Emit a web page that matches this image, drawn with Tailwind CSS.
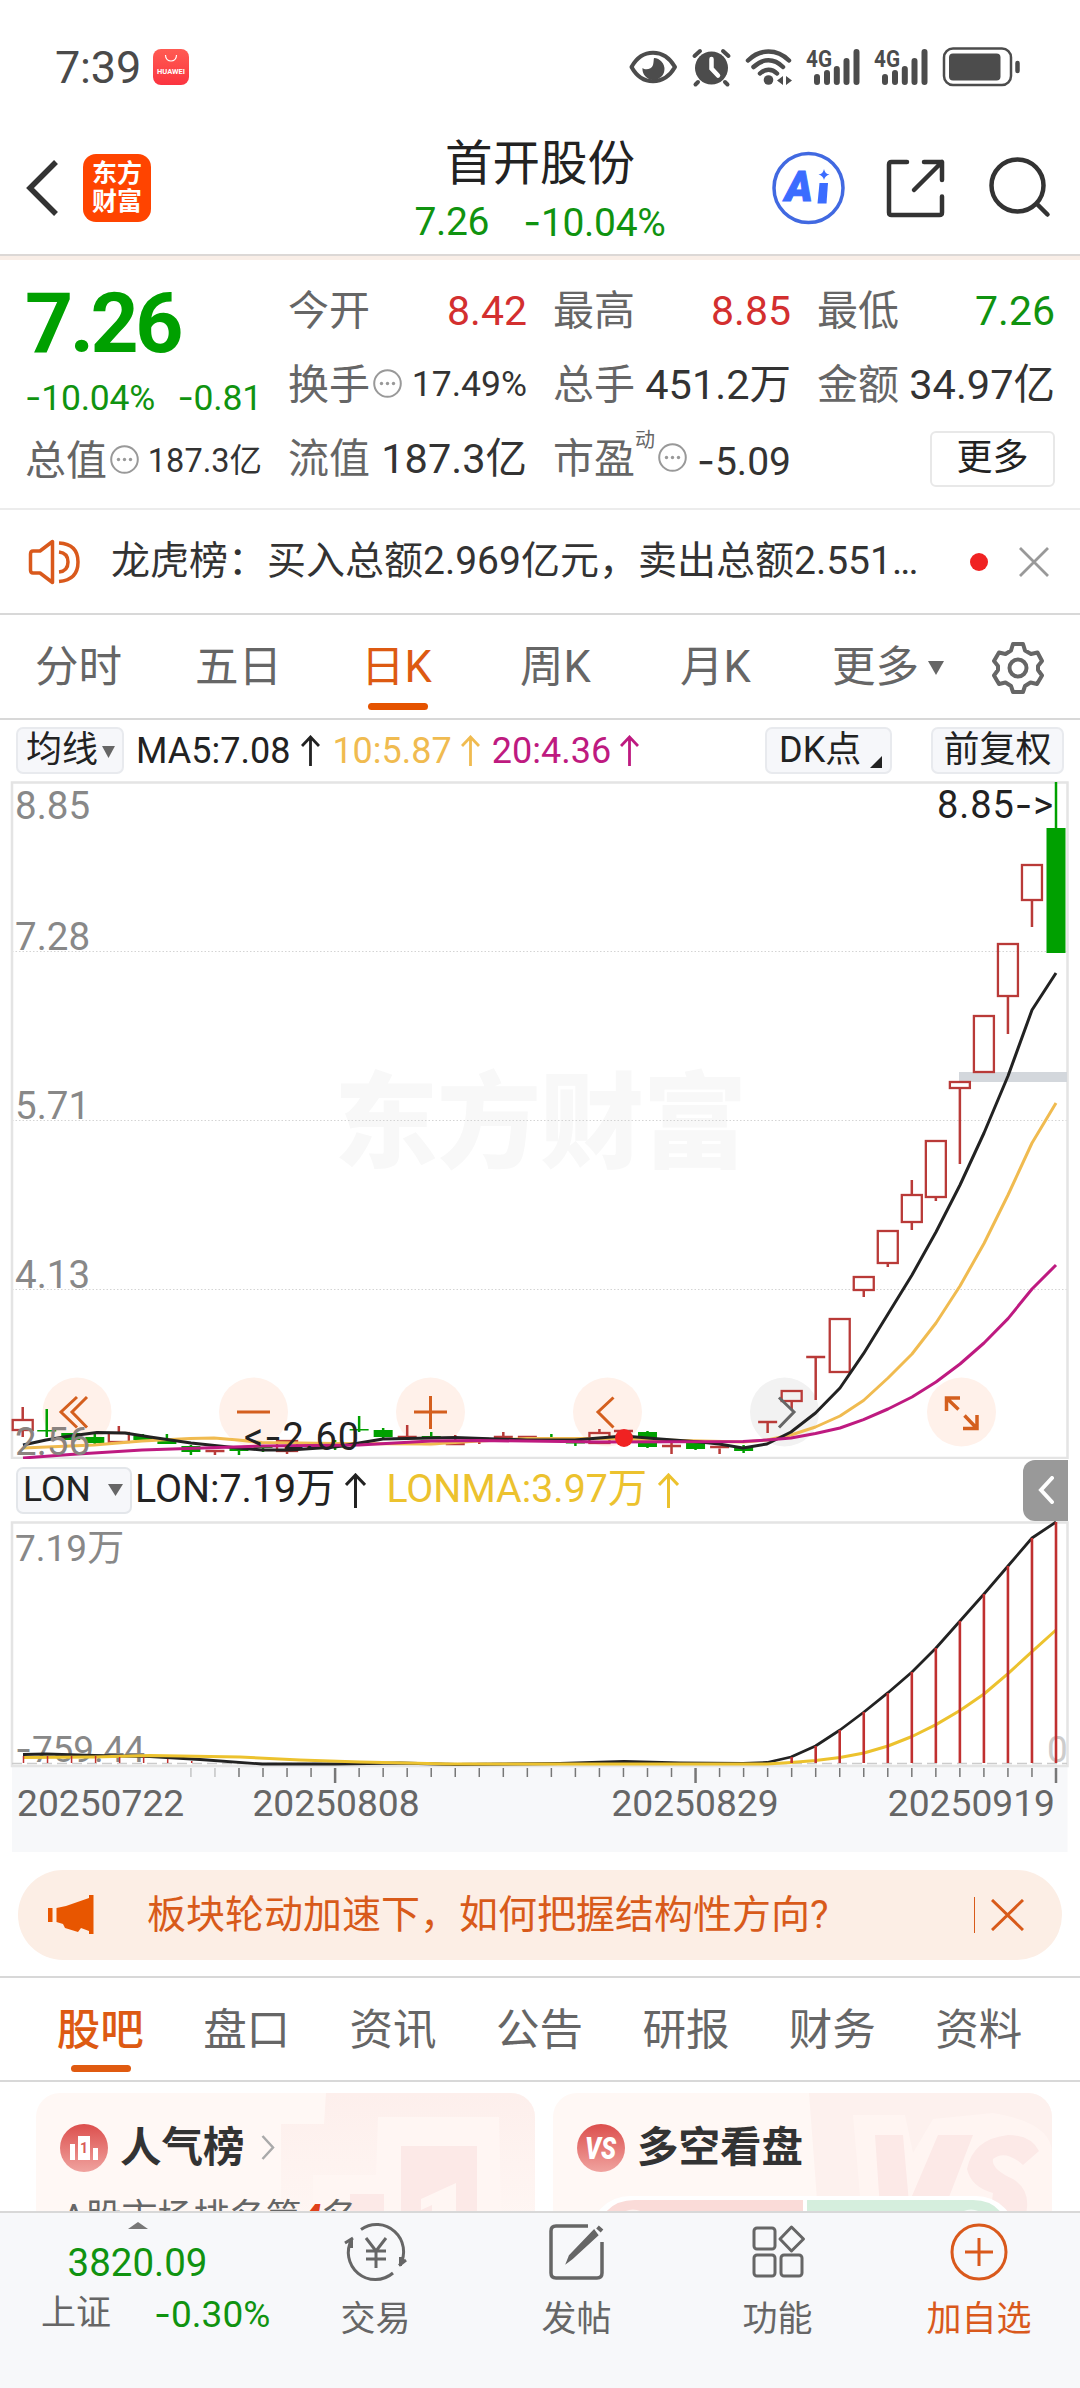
<!DOCTYPE html>
<html lang="zh-CN">
<head>
    <meta charset="UTF-8">
    <meta name="viewport" content="width=device-width, initial-scale=1.0">
    <title>首开股份</title>
    <script src="https://cdn.jsdelivr.net/npm/@tailwindcss/browser@4"></script>
</head>
<body class="bg-white">
<div class="w-[1080px] h-[2388px] overflow-hidden flex flex-col bg-white text-[#333] leading-none whitespace-nowrap font-['Roboto','Noto_Sans_CJK_SC',sans-serif]">

    <!-- Status bar -->
    <div class="h-[130px] shrink-0 flex items-center justify-between pl-[55px] pr-[59px] pt-[4px]">
        <div class="flex items-center gap-3">
            <span class="text-[45px] text-[#4a4a4a] tracking-[-0.2px]">7:39</span>
            <div class="w-9 h-9 rounded-[8px] bg-gradient-to-b from-[#ff5a52] to-[#fb3340] flex flex-col items-center">
                <svg class="mt-1.5" width="14" height="9" viewBox="0 0 14 9" fill="none" stroke="#fff" stroke-width="1.2"><path d="M1.500 0C1.500 8 12.500 8 12.500 0"/></svg>
                <span class="text-white text-[7.500px] font-bold mt-1">HUAWEI</span>
            </div>
        </div>
        <svg width="392" height="42" viewBox="630 46 392 42" fill="none" stroke="#4c4c4c" stroke-linecap="round">
            <!-- eye -->
            <path d="M632.500 67C643 48 665 48 676 67C665 86 643 86 632.500 67Z" stroke-width="4" stroke-linejoin="round"/>
            <path d="M655 58a11 11 0 1 1 -11.500 10c2 2 9 2 10.500 -3c.8 -3 .5 -5 1 -7z" fill="#4c4c4c" stroke="none"/>
            <!-- alarm -->
            <circle cx="712.500" cy="68" r="16.500" fill="#4c4c4c" stroke="none"/>
            <path d="M695.500 56l5.500 -5M729.500 56l-5.500 -5M699 82l-2.500 2.500M726 82l2.500 2.500" stroke-width="4"/>
            <path d="M712.500 59v9.500l6.500 7" stroke="#fff" stroke-width="4.500"/>
            <!-- wifi -->
            <path d="M749 60.500C761 48.500 778 48.500 790 60.500M754.500 67C764 58 775 58 784 67M761 73.500C766 68.500 773 68.500 778 73.500" stroke-width="4.500"/>
            <circle cx="769.500" cy="80" r="4.800" fill="#4c4c4c" stroke="none"/>
            <path d="M784 76v9l-6 -4.500zM787 76v9l6 -4.500z" fill="#4c4c4c" stroke="none"/>
            <!-- signals -->
            <g stroke-width="6">
                <path d="M818 77v5M828 73v9M837.800 69v13M847.500 61v21M857.500 52v30"/>
                <path d="M886 77v5M896 73v9M905.800 69v13M915.500 61v21M925.500 52v30"/>
            </g>
            <g fill="#4c4c4c" stroke="none" font-family="Roboto" font-weight="700" font-size="24">
                <text x="807" y="66.500" textLength="26" lengthAdjust="spacingAndGlyphs">4G</text>
                <text x="875" y="66.500" textLength="26" lengthAdjust="spacingAndGlyphs">4G</text>
            </g>
            <!-- battery -->
            <rect x="945" y="48.500" width="67" height="36.500" rx="9" stroke-width="2.500"/>
            <rect x="950" y="53.500" width="51.500" height="27" rx="4" fill="#4c4c4c" stroke="none"/>
            <path d="M1018.500 63v8" stroke-width="4.500"/>
        </svg>
    </div>

    <!-- Header -->
    <header class="h-[126px] shrink-0 flex items-center justify-between pl-[26px] pr-[29px] pb-[8px] border-b-2 border-[#dcd8d6] relative">
        <div class="flex items-center gap-6">
            <svg width="33" height="56" viewBox="0 0 33 56" fill="none" stroke="#333" stroke-width="5.500"><path d="M30 2L4 28L30 54"/></svg>
            <div class="w-[68px] h-[68px] rounded-[13px] bg-[#ff4400] text-white font-bold text-[25px] leading-[28px] flex flex-col items-center justify-center">
                <span>东方</span>
                <span>财富</span>
            </div>
        </div>
        <div class="absolute left-0 right-0 top-[9px] flex flex-col items-center">
            <h1 class="text-[47.500px] leading-[50px] text-[#222]">首开股份</h1>
            <div class="flex gap-[34px] text-[39px] leading-[66px] text-[#109310] tracking-[-0.3px]">
                <span>7.26</span>
                <span><span class="font-['Inter']">-</span>10.04%</span>
            </div>
        </div>
        <div class="flex items-center">
            <svg width="74" height="74" viewBox="771 151 74 74">
                <circle cx="808.500" cy="188" r="34.500" fill="none" stroke="#4169e1" stroke-width="3.500"/>
                <text x="785" y="201" font-family="Roboto" font-size="42" font-weight="900" font-style="italic" fill="#3b6cff" stroke="#3b6cff" stroke-width="1">A</text>
                <path d="M819.500 183h8.500l-1.500 20.500h-9z" fill="#3b6cff"/>
                <path d="M824 169q1 5 5.500 5.500q-4.500 1 -5.500 5.500q-1 -4.500 -5.500 -5.500q4.500 -.5 5.500 -5.500z" fill="#3b6cff"/>
            </svg>
            <svg class="ml-[41px]" width="60" height="60" viewBox="887 158 60 60" fill="none" stroke="#333" stroke-width="4.500" stroke-linecap="round" stroke-linejoin="round">
                <path d="M908 162H892.500Q890 162 890 164.500V212.500Q890 215 892.500 215H940.500Q943 215 943 212.500V196.500M925 162H943V180M943 162L915 190"/>
            </svg>
            <svg class="ml-[43px]" width="62" height="62" viewBox="990 157 62 62" fill="none" stroke="#333" stroke-width="4.500" stroke-linecap="round">
                <circle cx="1018.500" cy="185.500" r="26"/><path d="M1038 204L1048.500 214.500"/>
            </svg>
        </div>
    </header>
    <div class="h-[4px] shrink-0 bg-[#f9eee7]"></div>

    <!-- Quote -->
    <section class="h-[250px] shrink-0 border-b-2 border-[#ececec] grid grid-cols-[237px_239px_238px_238px] gap-x-[26px] pl-[25px] text-[41px]">
        <div class="flex flex-col">
            <div class="h-[120px] pt-[22px] text-[84px] font-bold tracking-[-3.500px] text-[#00a000]">7.26</div>
            <div class="flex justify-between text-[35.500px] text-[#109310] tracking-[-0.2px]">
                <span><span class="font-['Inter']">-</span>10.04%</span>
                <span><span class="font-['Inter']">-</span>0.81</span>
            </div>
            <div class="flex items-center h-[60px] mt-[15px]">
                <span class="text-[#666]">总值</span>
                <svg class="ml-[3px] mb-1" width="29" height="29" viewBox="0 0 29 29" fill="#999"><circle cx="14.500" cy="14.500" r="13.300" fill="none" stroke="#999" stroke-width="2"/><circle cx="8.500" cy="14.500" r="1.700"/><circle cx="14.500" cy="14.500" r="1.700"/><circle cx="20.500" cy="14.500" r="1.700"/></svg>
                <span class="ml-auto text-[32.500px]">187.3亿</span>
            </div>
        </div>
        <div class="flex flex-col pt-[22px]">
            <div class="h-[58px] flex items-center justify-between"><span class="text-[#666]">今开</span><span class="text-[#d32f2f]">8.42</span></div>
            <div class="h-[58px] mt-4 flex items-center">
                <span class="text-[#666]">换手</span>
                <svg class="ml-[3px] mb-1" width="29" height="29" viewBox="0 0 29 29" fill="#999"><circle cx="14.500" cy="14.500" r="13.300" fill="none" stroke="#999" stroke-width="2"/><circle cx="8.500" cy="14.500" r="1.700"/><circle cx="14.500" cy="14.500" r="1.700"/><circle cx="20.500" cy="14.500" r="1.700"/></svg>
                <span class="ml-auto text-[35.500px]">17.49%</span>
            </div>
            <div class="h-[58px] mt-4 flex items-center justify-between"><span class="text-[#666]">流值</span><span class="text-[41.500px]">187.3亿</span></div>
        </div>
        <div class="flex flex-col pt-[22px]">
            <div class="h-[58px] flex items-center justify-between"><span class="text-[#666]">最高</span><span class="text-[#d32f2f]">8.85</span></div>
            <div class="h-[58px] mt-4 flex items-center justify-between"><span class="text-[#666]">总手</span><span class="text-[41.500px]">451.2万</span></div>
            <div class="h-[58px] mt-4 flex items-center">
                <span class="text-[#666]">市盈</span>
                <span class="text-[20px] text-[#666] self-start">动</span>
                <svg class="ml-[3px] mb-1" width="29" height="29" viewBox="0 0 29 29" fill="#999"><circle cx="14.500" cy="14.500" r="13.300" fill="none" stroke="#999" stroke-width="2"/><circle cx="8.500" cy="14.500" r="1.700"/><circle cx="14.500" cy="14.500" r="1.700"/><circle cx="20.500" cy="14.500" r="1.700"/></svg>
                <span class="ml-auto text-[39px] pt-1"><span class="font-['Inter']">-</span>5.09</span>
            </div>
        </div>
        <div class="flex flex-col pt-[22px]">
            <div class="h-[58px] flex items-center justify-between"><span class="text-[#666]">最低</span><span class="text-[#109310]">7.26</span></div>
            <div class="h-[58px] mt-4 flex items-center justify-between"><span class="text-[#666]">金额</span><span class="text-[41.500px]">34.97亿</span></div>
            <button class="mt-[17px] self-end w-[125px] h-[56px] rounded-[6px] border-2 border-[#e8e8e8] text-[36px] text-[#222] leading-none pb-0.5">更多</button>
        </div>
    </section>

    <!-- News line -->
    <section class="h-[105px] shrink-0 border-b-2 border-[#d8d8d8] flex items-center pl-[28px] pr-[30px]">
        <svg width="54" height="46" viewBox="0 0 54 46" fill="none" stroke="#d9591c" stroke-width="3.500" stroke-linejoin="round">
            <path d="M24.500 2.500V43.500L12 34H5Q2.500 34 2.500 31V15Q2.500 12 5 12H12Z"/>
            <path d="M31 13Q40 14 40 23Q40 32 31 33M31 4Q50 5 50 23Q50 41 31 42.500"/>
        </svg>
        <span class="ml-[29px] text-[39px]">龙虎榜：买入总额2.969亿元，卖出总额2.551<span class="tracking-[-2px]">...</span></span>
        <span class="ml-auto w-[18px] h-[18px] rounded-full bg-[#f02222]"></span>
        <svg class="ml-[30px]" width="32" height="30" viewBox="0 0 32 30" fill="none" stroke="#999" stroke-width="2.800"><path d="M2 1L30 29M30 1L2 29"/></svg>
    </section>

    <!-- Period tabs -->
    <nav class="h-[105px] shrink-0 border-b-2 border-[#d8d8d8] flex items-center pl-[35px] pr-[35px] pt-[2px] text-[43.500px] text-[#666]">
        <span class="w-[160px]">分时</span>
        <span class="w-[166px]">五日</span>
        <span class="w-[159px] text-[#dd5a12] relative">日K<i class="absolute left-[7px] -bottom-[21px] w-[60px] h-[7px] rounded-full bg-[#e55300]"></i></span>
        <span class="w-[160px]">周K</span>
        <span class="w-[152px]">月K</span>
        <span>更多</span>
        <svg class="ml-[9px]" width="16" height="14" viewBox="0 0 16 14" fill="#666"><path d="M0 0H16L8 14Z"/></svg>
        <svg class="ml-auto" width="54" height="54" viewBox="992 639 54 54" fill="none" stroke="#666" stroke-width="4" stroke-linejoin="round">
            <path d="M1014 642H1024L1026 648.500L1032 652L1038.500 650.500L1043 659L1039 664V668L1043 673.500L1038 682L1031.500 680.500L1026 684L1024 690H1014L1012 684L1006.500 680.500L1000 682L995 673.500L999 668V664L995 659L1000 650.500L1006.500 652L1012 648.500Z"/>
            <circle cx="1019" cy="666" r="8.500"/>
        </svg>
    </nav>

    <!-- MA row -->
    <div class="h-[61px] shrink-0 flex items-center pl-4 pr-4 text-[36px] text-[#222]">
        <div class="w-[108px] h-[47px] rounded-[7px] border-2 border-[#e8eaee] bg-[#f6f7fa] flex items-center gap-[4px] pl-2 pb-0.5">均线<svg class="mt-1" width="13" height="12" viewBox="0 0 14 13" fill="#666"><path d="M0 0H14L7 13Z"/></svg></div>
        <span class="ml-[12px]">MA5:7.08</span>
        <svg class="ml-[11px]" width="19" height="31" viewBox="0 0 19 31" fill="none" stroke="#222" stroke-width="2.800"><path d="M9.500 31V3M1 11L9.500 2L18 11"/></svg>
        <span class="ml-[12px] text-[#f0bb50]">10:5.87</span>
        <svg class="ml-[9px]" width="19" height="31" viewBox="0 0 19 31" fill="none" stroke="#f0bb50" stroke-width="2.800"><path d="M9.500 31V3M1 11L9.500 2L18 11"/></svg>
        <span class="ml-[12px] text-[#be1a80]">20:4.36</span>
        <svg class="ml-[9px]" width="19" height="31" viewBox="0 0 19 31" fill="none" stroke="#be1a80" stroke-width="2.800"><path d="M9.500 31V3M1 11L9.500 2L18 11"/></svg>
        <div class="ml-auto w-[127px] h-[47px] rounded-[7px] border-2 border-[#e8eaee] bg-[#f6f7fa] flex items-center pl-3 pb-0.5">DK点<svg class="ml-[9px] mt-6" width="12" height="12" viewBox="0 0 12 12" fill="#222"><path d="M12 0V12H0Z"/></svg></div>
        <div class="ml-[39px] w-[133px] h-[47px] rounded-[7px] border-2 border-[#e8eaee] bg-[#f6f7fa] flex items-center justify-center pb-0.5">前复权</div>
    </div>

    <!-- K line chart -->
    <svg id="kline" class="shrink-0 block" width="1080" height="678" viewBox="0 781 1080 678" fill="none">
        <text x="334" y="1160" font-size="104" font-weight="900" fill="#f8f8f8" textLength="413">东方财富</text>
        <path d="M12 951.500H1067M12 1120.500H1067M12 1289.500H1067" stroke="#d4d4d4" stroke-width="1" stroke-dasharray="1.500 2"/>
        <path d="M12 782.500H1067.500V1458H12Z" stroke="#e4e4e4" stroke-width="2.500"/>
        <g fill="#fff1ea">
            <circle cx="77" cy="1412" r="34.500"/><circle cx="253.500" cy="1412" r="34.500"/><circle cx="430.500" cy="1412" r="34.500"/><circle cx="607.500" cy="1412" r="34.500"/><circle cx="961.500" cy="1412" r="34.500"/>
            <circle cx="784.500" cy="1412" r="34.500" fill="#f2f2f2"/>
        </g>
        <path d="M959 1077H1067" stroke="#d3d7dc" stroke-width="10"/>
        <g id="candles" stroke-width="2.500"></g>
        <g stroke-width="3" stroke-linejoin="round">
            <path stroke="#f0bb50" d="M23 1448L94 1445L142 1441L190 1438.500L214 1438L238 1440L262 1442.500L335 1443.500L431 1444L479 1441L527 1438.500L599 1438.500L743 1442L767 1440L791 1435L815.500 1427L840 1416L863.500 1400.500L888 1378L912 1354L936 1323L960 1286L984 1243.500L1008 1195L1032 1143L1056 1103"/>
            <path stroke="#222" d="M23 1445L46 1440L70 1436L97 1432.500L125 1433L150 1437L191 1443L238 1448L262 1450L290 1450L335 1447L359 1443L383 1439L455 1437.500L527 1440L575 1440L599 1438L624 1436L660 1439L700 1442L719 1444L743 1448L767 1444L791 1432L815.500 1413L840 1388L863.500 1353.700L888 1314L912 1275L936 1232L960 1185L984 1133L1008 1076L1032 1010L1056 973"/>
            <path stroke="#be1a80" d="M23 1458L70 1454.500L142 1450L262 1446L359 1445L431 1441L479 1440.500L599 1442L743 1441.500L767 1440L791 1438L815.500 1433.500L840 1428L863.500 1419.600L888 1409L912 1397L936 1382L960 1364L984 1343L1008 1318.600L1032 1289L1056 1265"/>
        </g>
        <circle cx="624" cy="1438" r="9" fill="#f02222"/>
        <g font-size="38.500" fill="#888">
            <text x="15" y="819">8.85</text><text x="15" y="950">7.28</text><text x="15" y="1119">5.71</text><text x="15" y="1288">4.13</text><text x="15" y="1455" fill="#8a8380">2.56</text>
        </g>
        <g font-size="38" fill="#222">
            <text x="937" y="818" textLength="116">8.85<tspan font-family="Inter">-</tspan>&gt;</text>
            <text x="244" y="1450" textLength="115">&lt;<tspan font-family="Inter">-</tspan>2.60</text>
        </g>
        <g stroke="#d45f1e" stroke-width="3">
            <path d="M77 1397L61 1412L77 1427.500M87 1397L72 1412L87 1427.500"/>
            <path d="M237 1412H270M414 1412H447M430.500 1396V1429"/>
            <path d="M613.500 1397.500L598 1412L613.500 1427.500"/>
            <path d="M779 1397.500L794 1412L779 1427.500" stroke="#666"/>
            <path d="M946.500 1411V1398H960M946.500 1398L958.500 1409.500M963 1428.500H977V1415M964.500 1415.500L976.500 1428" stroke-width="3.500"/>
        </g>
    </svg>

    <!-- LON row -->
    <div class="h-[62px] shrink-0 flex items-center pl-4 pr-3 text-[39.300px] text-[#222]">
        <div class="w-[116px] h-[47px] rounded-[7px] border-2 border-[#e3e6ea] bg-[#f6f7fa] flex items-center pl-[5px] text-[35.500px]">LON<svg class="ml-auto mr-[7px]" width="15" height="12" viewBox="0 0 14 12" preserveAspectRatio="none" fill="#666"><path d="M0 0H14L7 12Z"/></svg></div>
        <span class="ml-[3px]">LON:7.19万</span>
        <svg class="ml-[10px]" width="21" height="35" viewBox="0 0 21 35" fill="none" stroke="#222" stroke-width="3"><path d="M10.500 35V3M1 12L10.500 2L20 12"/></svg>
        <span class="ml-[20px] text-[#ecc22e]">LONMA:3.97万</span>
        <svg class="ml-[11px]" width="21" height="35" viewBox="0 0 21 35" fill="none" stroke="#ecc22e" stroke-width="3"><path d="M10.500 35V3M1 12L10.500 2L20 12"/></svg>
        <div class="ml-auto w-[45px] h-[61px] rounded-l-[12px] bg-[#999] flex items-center justify-center">
            <svg width="16" height="28" viewBox="0 0 16 28" fill="none" stroke="#fff" stroke-width="4" stroke-linecap="round"><path d="M14 2L3 14L14 26"/></svg>
        </div>
    </div>

    <!-- LON chart -->
    <svg class="shrink-0 block" width="1080" height="331" viewBox="0 1521 1080 331" fill="none">
        <path d="M12 1767H1067.500V1852H12Z" fill="#f7f8fa"/>
        <path d="M12 1522.500H1067.500V1766H12Z" stroke="#e4e4e4" stroke-width="2.500"/>
        <path d="M12 1763.500H1067" stroke="#ccc" stroke-width="1.500" stroke-dasharray="10 5"/>
        <g id="ticks" stroke="#777" stroke-width="1.500"></g>
        <g font-size="37" fill="#888">
            <text x="15" y="1561">7.19万</text>
            <text x="15" y="1762" textLength="130"><tspan font-family="Inter">-</tspan>759.44</text>
            <text x="1047" y="1762" fill="#ccc">0</text>
        </g>
        <path stroke="#222" stroke-width="2.800" stroke-linejoin="round" d="M23 1754.500L46 1754L94 1755.500L150 1756.500L200 1759.500L262 1764L335 1764L400 1763L455 1764.500L560 1763.500L624 1761.500L680 1763L743 1763.500L767 1762.500L791 1757L815.500 1746L840 1730L864 1712L888 1692.700L912 1672L936 1648L960 1621L984 1594L1008 1566L1032 1538L1056 1522"/>
        <path stroke="#ecc22e" stroke-width="3" stroke-linejoin="round" d="M23 1757.500L94 1757L150 1755.500L240 1757L300 1760L360 1762L450 1764L560 1764L767 1764L791 1762.500L815.500 1760.500L840 1757.500L864 1753L888 1746L912 1736.500L936 1724.600L960 1710.500L984 1694L1008 1673.600L1032 1651.700L1056 1630"/>
        <g id="bars" stroke="#c03030" stroke-width="2.600"></g>
        <g font-size="37.200" fill="#666">
            <text x="17" y="1816">20250722</text>
            <text x="336" y="1816" text-anchor="middle">20250808</text>
            <text x="695" y="1816" text-anchor="middle">20250829</text>
            <text x="1055" y="1816" text-anchor="end">20250919</text>
        </g>
    </svg>

    <!-- Banner -->
    <div class="h-[90px] mt-[18px] mx-[18px] shrink-0 rounded-full bg-[#fceee5] flex items-center pl-[30px] pr-[38px] text-[39px] text-[#d85a1a]">
        <svg width="46" height="40" viewBox="0 0 46 40" fill="#e85600"><path d="M0 13H4.500V27H0ZM8.500 13L18 11L41 3V0H45.500V39H41V36L33 33L30 37L17 33L15 29L8.500 27Z"/></svg>
        <span class="ml-[53px]">板块轮动加速下，如何把握结构性方向?</span>
        <i class="ml-auto w-[1.500px] h-[36px] bg-[#d85a1a]"></i>
        <svg class="ml-4" width="33" height="32" viewBox="0 0 33 32" fill="none" stroke="#d85a1a" stroke-width="3"><path d="M1 1L32 31M32 1L1 31"/></svg>
    </div>

    <!-- Section tabs -->
    <nav class="h-[106px] mt-4 shrink-0 border-y-2 border-[#d8d8d8] grid grid-cols-7 items-center pl-[27px] pr-[28px] pt-[3px] text-[43.500px] text-[#666] text-center">
        <span class="text-[#dd5a12] font-medium relative">股吧<i class="absolute left-[44px] -bottom-[20px] w-[60px] h-[7px] rounded-full bg-[#e05a10]"></i></span>
        <span>盘口</span>
        <span>资讯</span>
        <span>公告</span>
        <span>研报</span>
        <span>财务</span>
        <span>资料</span>
    </nav>

    <!-- Cards, cut off by the bottom bar -->
    <div class="h-[129px] shrink-0 overflow-hidden flex gap-[18px] px-[36px] pt-[11px]">
        <div class="w-[499px] h-[160px] shrink-0 rounded-[24px] bg-[#fff8f5] relative overflow-hidden">
            <svg class="absolute inset-0" width="499" height="160" viewBox="0 0 499 160">
                <defs>
                    <linearGradient id="fade" x1="0" y1="0" x2="0" y2="1"><stop offset="0" stop-color="#fdefec"/><stop offset="1" stop-color="#fff8f5"/></linearGradient>
                    <linearGradient id="badge" x1="0" y1="0" x2="0" y2="1"><stop offset="0" stop-color="#dc4f4d"/><stop offset="1" stop-color="#f0a39f"/></linearGradient>
                </defs>
                <path d="M290 0H499V160H245V31H288Z" fill="url(#fade)"/>
                <path d="M342 24H463L466 160H277V82H340Z" fill="#fff6f3"/>
                <path d="M365 53H441V160H365ZM314 101H348V160H314Z" fill="#fce9e7"/>
                <path d="M385 106L420 90V160H396V112L385 117Z" fill="#fff6f3"/>
                <circle cx="48" cy="55" r="24" fill="url(#badge)"/>
                <path d="M34 51H39V67H34ZM42 43H54V67H42ZM57 55H62V67H57Z" fill="#fff"/>
                <text x="44" y="60" font-size="14" font-weight="700" fill="#d95b58">1</text>
            </svg>
            <div class="relative pl-[84px] h-[107px] pt-[2px] flex items-center gap-4 text-[41.500px] font-bold">人气榜<svg width="14" height="25" viewBox="0 0 14 25" fill="none" stroke="#aaa" stroke-width="2.500"><path d="M1.500 1L12 12.500L1.500 24"/></svg></div>
            <div class="relative pl-[26px] text-[36px] text-[#666]">A股市场排名第<span class="text-[#e0401a] font-bold italic">4</span>名</div>
        </div>
        <div class="w-[499px] h-[160px] shrink-0 rounded-[24px] bg-[#fff8f5] relative overflow-hidden">
            <svg class="absolute inset-0" width="499" height="160" viewBox="0 0 499 160">
                <path d="M256 0H499V160H268Z" fill="#fdf1ee"/>
                <path d="M300 22H352L360 60L380 26L440 20Q499 30 499 60V160H312Z" fill="#fff5f2"/>
                <path d="M322 42H350L356 110L385 42H420L386 130H328ZM486 58Q478 42 455 42Q420 46 414 76Q418 94 440 100L436 130H470Q482 100 460 86Q438 76 440 66Q452 56 470 72Z" fill="#fce9e7"/>
                <circle cx="48" cy="55" r="24" fill="url(#badge)"/>
                <text x="32" y="66" font-size="31" font-weight="900" font-style="italic" fill="#fff" textLength="31" lengthAdjust="spacingAndGlyphs">VS</text>
                <rect x="37" y="103" width="426" height="80" rx="40" fill="#fff"/>
                <path d="M250 107H82Q46 107 42 150H250Z" fill="#fadbd8"/>
                <path d="M254 107H420Q454 107 458 150H254Z" fill="#d5eedd"/>
                <circle cx="80" cy="134" r="16" fill="none" stroke="#fff2ef" stroke-width="3"/><circle cx="418" cy="134" r="16" fill="none" stroke="#f2fbf5" stroke-width="3"/>
            </svg>
            <div class="relative pl-[84px] h-[107px] pt-[2px] flex items-center text-[41.500px] font-bold">多空看盘</div>
        </div>
    </div>

    <!-- Bottom bar -->
    <footer class="flex-1 border-t-2 border-[#d8d8d8] bg-[#f7f8fa] flex text-[35px] text-[#666]">
        <div class="w-[275px] flex flex-col items-center pt-[9px]">
            <svg width="20" height="7" viewBox="0 0 20 7" fill="#777"><path d="M10 0L20 7H0Z"/></svg>
            <span class="text-[38.500px] text-[#109310] mt-[15px]">3820.09</span>
            <div class="flex items-center gap-[43px] mt-[12px] pl-[37px] self-start">
                <span class="pl-1">上证</span>
                <span class="text-[37px] text-[#109310]"><span class="font-['Inter']">-</span>0.30%</span>
            </div>
        </div>
        <div class="w-[201px] flex flex-col items-center pt-[9px]">
            <svg width="68" height="60" viewBox="0 0 68 60" fill="none" stroke="#666" stroke-width="3">
                <path d="M19 7.500A27 27 0 0 1 58 43M51 51A27 27 0 0 1 10 17M58.500 44V35M57 43.500L64 38M9.500 16V26M11 16L3 21"/>
                <path d="M24 16L34 29L44 16M34 29V46M24 29H44M24 37H44"/>
            </svg>
            <span class="mt-[20px]">交易</span>
        </div>
        <div class="w-[201px] flex flex-col items-center pt-[9px]">
            <svg width="58" height="60" viewBox="0 0 58 60" fill="none" stroke="#666" stroke-width="3.500">
                <path d="M40 4H8Q3 4 3 9V51Q3 56 8 56H49Q54 56 54 51V20"/>
                <path d="M49 13L24 36L20 39L22 34L46 9Z" fill="#666" stroke-width="2.500"/>
                <path d="M49.500 5L54 9" stroke-width="4"/>
            </svg>
            <span class="mt-[20px]">发帖</span>
        </div>
        <div class="w-[201px] flex flex-col items-center pt-[9px]">
            <svg width="56" height="60" viewBox="0 0 56 60" fill="none" stroke="#666" stroke-width="3" stroke-linejoin="round">
                <rect x="4" y="6" width="21" height="21" rx="3"/><rect x="4" y="33" width="21" height="21" rx="3"/><rect x="31" y="33" width="21" height="21" rx="3"/>
                <path d="M41.500 5L53.500 17L41.500 29L30 17Z"/>
            </svg>
            <span class="mt-[20px]">功能</span>
        </div>
        <div class="w-[202px] flex flex-col items-center pt-[9px] text-[#d9591c]">
            <svg width="60" height="60" viewBox="0 0 60 60" fill="none" stroke="#d9591c" stroke-width="3"><circle cx="30" cy="30" r="27"/><path d="M30 16V44M16 30H44"/></svg>
            <span class="mt-[20px]">加自选</span>
        </div>
    </footer>
</div>

<script>
    const STEP = 24.03;
    const RED = '#b93a38';
    const GREEN = '#00a000';

    // newest first: [colour, high, body top, body bottom, low]
    const candles = [
        ['g', 782, 828, 953, 953], ['r', 865, 865, 900, 927], ['r', 944, 944, 996, 1034],
        ['r', 1016, 1016, 1072, 1072], ['r', 1082, 1082, 1088, 1164], ['r', 1141, 1141, 1197, 1201],
        ['r', 1180, 1195, 1222, 1230], ['r', 1231, 1231, 1263, 1267], ['r', 1277, 1277, 1290, 1297],
        ['r', 1319, 1319, 1372, 1372], ['r', 1357, 1357, 1357, 1400], ['r', 1391, 1391, 1401, 1409],
        ['r', 1422, 1422, 1422, 1433], ['g', 1445, 1447, 1451, 1453], ['r', 1446, 1447, 1448.5, 1454],
        ['g', 1441, 1442, 1449, 1450], ['r', 1442, 1446, 1447, 1454], ['g', 1431, 1432, 1447, 1448],
        ['r', 1431, 1431, 1433, 1433], ['r', 1429, 1433, 1443, 1443], ['g', 1442, 1442, 1443, 1446],
        ['g', 1434, 1437, 1438, 1439], ['r', 1437, 1437, 1438, 1438], ['r', 1432, 1437, 1438, 1438],
        ['r', 1437, 1439, 1440, 1444], ['r', 1435, 1444, 1444, 1444], ['g', 1432, 1436, 1438, 1438],
        ['r', 1425, 1437, 1438, 1438], ['g', 1428, 1430, 1437, 1438], ['g', 1416, 1429, 1429, 1432],
        ['g', 1440, 1446, 1447, 1450], ['g', 1442, 1445, 1447, 1448], ['r', 1441, 1441, 1451, 1454],
        ['g', 1445, 1446, 1448, 1452], ['g', 1447, 1448, 1451, 1455], ['r', 1450, 1451, 1452, 1455],
        ['g', 1445, 1446, 1452, 1455], ['g', 1434, 1441, 1444, 1444], ['g', 1434, 1436, 1440, 1441],
        ['r', 1426, 1433, 1442, 1442], ['g', 1434, 1437, 1443, 1445], ['g', 1433, 1433, 1440, 1440],
        ['g', 1409, 1430, 1430, 1437], ['r', 1407, 1420, 1430, 1437]
    ];
    document.getElementById('candles').innerHTML = candles.map(([c, hi, top, bot, lo], i) => {
        const x = 1056 - STEP * i;
        const color = c === 'g' ? GREEN : RED;
        if (c === 'g') {
            return `<path stroke="${color}" d="M${x} ${hi}V${lo}"/><rect x="${x - 9.5}" y="${top}" width="19" height="${Math.max(bot - top, 1.5)}" fill="${color}"/>`;
        }
        const body = bot - top < 3
            ? `<path d="M${x - 9.5} ${top}H${x + 9.5}" stroke="${color}"/>`
            : `<rect x="${x - 10}" y="${top}" width="20" height="${bot - top}" stroke="${color}" stroke-width="2.3"/>`;
        return `${body}<path stroke="${color}" d="M${x} ${hi}V${top}M${x} ${bot}V${lo}"/>`;
    }).join('');

    // LON histogram
    const tops = [1522, 1538, 1566, 1594, 1621, 1648, 1672, 1693, 1712, 1730, 1746, 1757];
    const early = [1756, 1756, 1756, 1756, 1757, 1757, 1759, 1761];
    document.getElementById('bars').innerHTML =
        tops.map((y, i) => `<path d="M${1056 - STEP * i} ${y}V1763"/>`).join('') +
        early.map((y, i) => `<path stroke-width="1.5" d="M${23.5 + STEP * i} ${y}V1763"/>`).join('');

    let ticks = '';
    for (let i = 0; i < 37; i++) {
        const x = 1056 - STEP * i;
        const major = i === 0 || i === 15 || i === 30;
        ticks += `<path d="M${x} 1768V${major ? 1783 : 1777}" ${major ? 'stroke-width="2.5"' : ''} opacity="${i > 34 ? 0.4 : 1}"/>`;
    }
    document.getElementById('ticks').innerHTML = ticks;
</script>
</body>
</html>
